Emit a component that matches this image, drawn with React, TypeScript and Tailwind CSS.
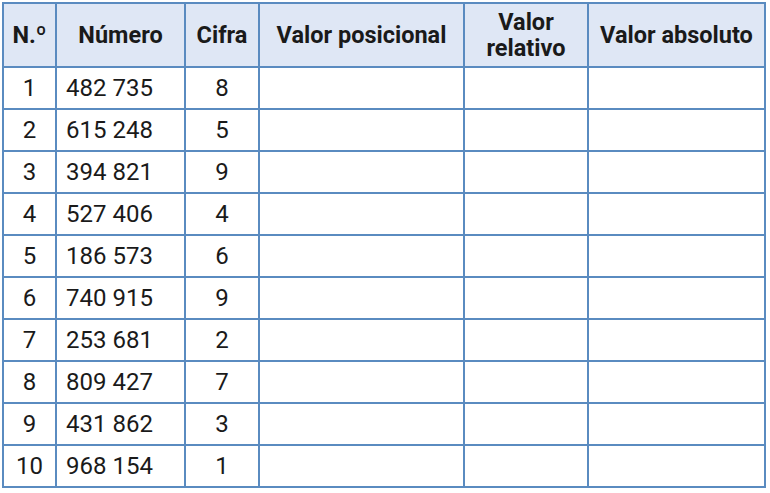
const rows: [number, string, number][] = [
  [1, "482 735", 8],
  [2, "615 248", 5],
  [3, "394 821", 9],
  [4, "527 406", 4],
  [5, "186 573", 6],
  [6, "740 915", 9],
  [7, "253 681", 2],
  [8, "809 427", 7],
  [9, "431 862", 3],
  [10, "968 154", 1],
];

const cell = "border-2 border-[#5a8bc0]";

export default function App() {
  return (
    <div className="bg-white w-[770px] h-[493px] pt-[2px] pl-[2px] font-['Roboto',sans-serif] text-[#1a1a1a]">
      <table className="table-fixed border-collapse w-[762px]">
        <colgroup>
          <col className="w-[53px]" />
          <col className="w-[129px]" />
          <col className="w-[74px]" />
          <col className="w-[205px]" />
          <col className="w-[124px]" />
          <col className="w-[177px]" />
        </colgroup>
        <thead>
          <tr className="h-[64px] bg-[#dfe7f5] text-[23.5px] font-bold leading-[26px]">
            <th className={cell}>N.º</th>
            <th className={cell}>Número</th>
            <th className={cell}>Cifra</th>
            <th className={cell}>Valor posicional</th>
            <th className={cell}>
              Valor
              <br />
              relativo
            </th>
            <th className={cell}>Valor absoluto</th>
          </tr>
        </thead>
        <tbody>
          {rows.map(([n, num, cifra]) => (
            <tr key={n} className="h-[42px] text-[24px]">
              <td className={`${cell} text-center`}>{n}</td>
              <td className={`${cell} pl-[9px]`}>{num}</td>
              <td className={`${cell} text-center`}>{cifra}</td>
              <td className={cell}></td>
              <td className={cell}></td>
              <td className={cell}></td>
            </tr>
          ))}
        </tbody>
      </table>
    </div>
  );
}
